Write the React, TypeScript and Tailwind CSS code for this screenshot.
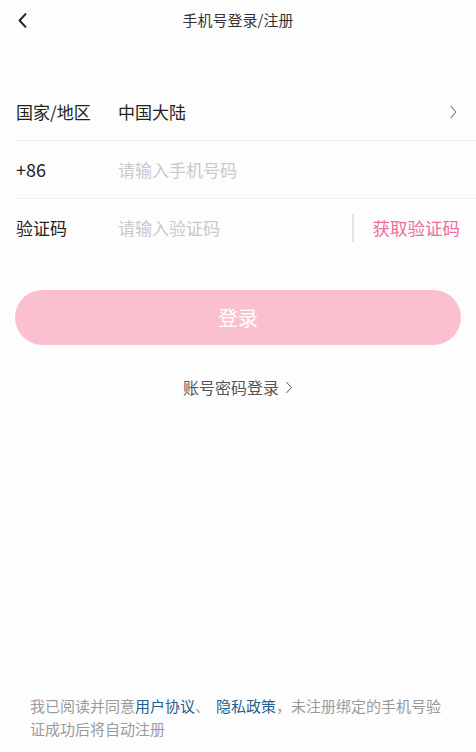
const font = "font-['Microsoft_YaHei','Noto_Sans_CJK_SC',sans-serif]"

const Chevron = ({ dir, className }: { dir: "left" | "right"; className?: string }) => (
  <svg viewBox="0 0 12 20" className={className} fill="none" stroke="currentColor">
    {dir === "left" ? (
      <path d="M9.5 2.5 L2.5 10 L9.5 17.5" strokeWidth="2.4" strokeLinecap="round" strokeLinejoin="round" />
    ) : (
      <path d="M2.5 2 L9.5 10 L2.5 18" strokeWidth="1.5" strokeLinecap="round" strokeLinejoin="round" />
    )}
  </svg>
)

export default function App() {
  return (
    <div className={`${font} h-[752px] w-full flex flex-col bg-[#fefdfe] text-[#222]`}>
      <header className="relative h-10 flex items-center justify-center">
        <button className="absolute left-[16px] top-[12px] text-[#222]">
          <Chevron dir="left" className="w-[13px] h-[17px]" />
        </button>
        <h1 className="text-[15px] text-[#333]">手机号登录/注册</h1>
      </header>

      <div className="mt-[43px] ml-4">
        <div className="h-[58px] flex items-center border-b border-[#eeeeee] pr-[18px] text-[17px]">
          <span className="w-[102px]">国家/地区</span>
          <span className="flex-1">中国大陆</span>
          <Chevron dir="right" className="w-[9px] h-[14px] text-[#777]" />
        </div>
        <div className="h-[58px] flex items-center border-b border-[#eeeeee] text-[17px]">
          <span className="w-[102px] text-[18px]">+86</span>
          <span className="flex-1 text-[#c9c9c9]">请输入手机号码</span>
        </div>
        <div className="h-[58px] flex items-center pr-4 text-[17px]">
          <span className="w-[102px]">验证码</span>
          <span className="flex-1 text-[#c9c9c9]">请输入验证码</span>
          <span className="w-[2px] h-[28px] bg-[#e3e3e3] mr-[19px]" />
          <span className="text-[17.5px] text-[#ec6f98]">获取验证码</span>
        </div>
      </div>

      <button className="mt-[33px] mx-[15px] h-[55px] rounded-full bg-[#fbc0d0] text-white text-[20px]">
        登录
      </button>

      <div className="mt-[30px] flex items-center justify-center gap-[6px] text-[16px] text-[#555]">
        <span>账号密码登录</span>
        <Chevron dir="right" className="w-[8px] h-[13px] text-[#555]" />
      </div>

      <div className="mt-auto px-[30px] pb-[12px] text-[15px] leading-[23px] text-[#9a9a9a]">
        <div className="flex whitespace-nowrap">
          <span>我已阅读并同意</span>
          <span className="text-[#1f5f8f]">用户协议</span>
          <span className="mr-[6px]">、</span>
          <span className="text-[#1f5f8f]">隐私政策</span>
          <span>，未注册绑定的手机号验</span>
        </div>
        <div>证成功后将自动注册</div>
      </div>
    </div>
  )
}
